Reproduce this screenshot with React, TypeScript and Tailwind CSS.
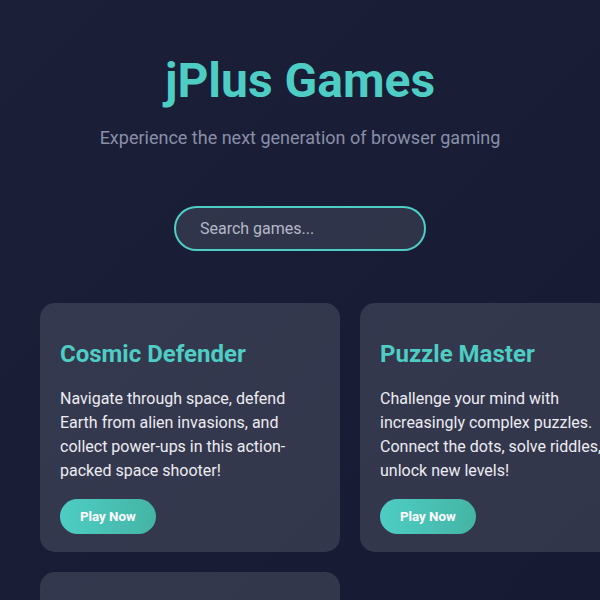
import React from 'react';

interface Game {
  title: string;
  description: string;
}

const games: Game[] = [
  {
    title: 'Cosmic Defender',
    description:
      'Navigate through space, defend Earth from alien invasions, and collect power-ups in this action-packed space shooter!',
  },
  {
    title: 'Puzzle Master',
    description:
      'Challenge your mind with increasingly complex puzzles. Connect the dots, solve riddles, and unlock new levels!',
  },
  {
    title: 'Speed Racer',
    description: 'Race against the clock on neon tracks and beat your best lap times.',
  },
];

function GameCard({ game }: { game: Game }) {
  return (
    <div className="w-[300px] rounded-[15px] bg-white/[0.12] pt-[33px] px-5 pb-[18px]">
      <h3 className="text-[24px] leading-9 font-bold text-[#4ecdc4]">{game.title}</h3>
      <p className="mt-[15px] text-[16px] leading-6 text-[#ececf2]">{game.description}</p>
      <button className="mt-4 rounded-full bg-gradient-to-r from-[#4ecdc4] to-[#44b5a5] px-5 py-2 text-[13.3px] leading-[19px] font-bold text-white">
        Play Now
      </button>
    </div>
  );
}

export default function App() {
  return (
    <div
      className="h-[600px] w-[600px] overflow-hidden bg-gradient-to-br from-[#1b1f38] to-[#161b33]"
      style={{ fontFamily: 'Roboto, "Noto Sans", sans-serif' }}
    >
      <div className="flex flex-col items-center pt-[51px]">
        <h1 className="text-[48px] leading-[60px] font-bold text-[#4ecdc4]">jPlus Games</h1>
        <p className="mt-[15px] text-[18px] leading-6 text-[#8a8fa8]">
          Experience the next generation of browser gaming
        </p>
        <div className="mt-[56px] w-[252px] h-[45px] rounded-full border-2 border-[#4ecdc4] bg-white/10 flex items-center px-6">
          <span className="text-[16px] text-[#b4b8c8]">Search games...</span>
        </div>
      </div>
      <div className="mt-[52px] ml-10 grid grid-cols-[300px_300px] gap-5">
        {games.map(g => (
          <GameCard key={g.title} game={g} />
        ))}
      </div>
    </div>
  );
}
